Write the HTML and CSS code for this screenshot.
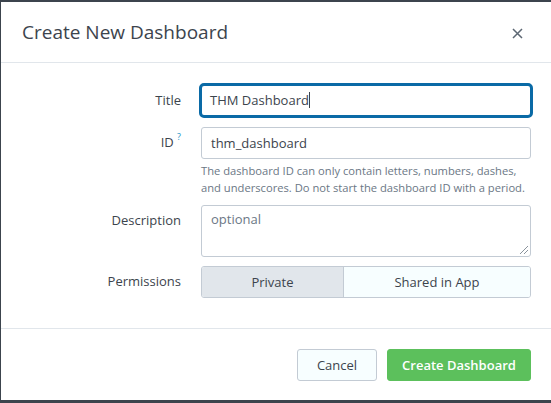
FILE: index.html
```html
<!DOCTYPE html>
<html>
<head>
<meta charset="utf-8">
<link rel="stylesheet" href="styles.css">
</head>
<body>
<div class="modal">
  <div class="header">
    <h1 class="title">Create New Dashboard</h1>
    <svg class="close" width="11" height="11" viewBox="0 0 11 11"><path d="M1 1 L10 10 M10 1 L1 10" stroke="#5c6773" stroke-width="1.5" fill="none"/></svg>
  </div>
  <div class="body">
    <div class="row">
      <label class="label title-label">Title</label>
      <div class="field"><div class="input focused">THM Dashboard<span class="caret"></span></div></div>
    </div>
    <div class="row">
      <label class="label">ID <sup class="help">?</sup></label>
      <div class="field">
        <div class="input">thm_dashboard</div>
        <p class="hint">The dashboard ID can only contain letters, numbers, dashes, and underscores. Do not start the dashboard ID with a period.</p>
      </div>
    </div>
    <div class="row">
      <label class="label">Description</label>
      <div class="field"><div class="textarea"><span class="ph">optional</span><span class="grip"></span></div></div>
    </div>
    <div class="row">
      <label class="label">Permissions</label>
      <div class="field">
        <div class="toggle">
          <span class="opt active">Private</span>
          <span class="opt">Shared in App</span>
        </div>
      </div>
    </div>
  </div>
  <div class="footer">
    <button class="btn cancel">Cancel</button>
    <button class="btn primary">Create Dashboard</button>
  </div>
</div>
</body>
</html>
```
FILE: styles.css
```css
html, body { margin: 0; padding: 0; }
body {
  background: #3c444d;
  width: 551px;
  height: 403px;
  overflow: hidden;
  font-family: "Open Sans", "Liberation Sans", sans-serif;
  color: #3c444d;
}
.modal {
  margin: 2px 0 0 1px;
  width: 550px;
  height: 398px;
  background: #fff;
  display: flex;
  flex-direction: column;
}
.header {
  height: 60px;
  border-bottom: 1px solid #e1e6eb;
  display: flex;
  align-items: center;
  justify-content: space-between;
  padding: 0 28px 0 21px;
}
.title {
  margin: 0;
  font-size: 19px;
  font-weight: 400;
  color: #3c444d;
}
.close {
  margin-top: 3px;
}
.body {
  padding: 20px 20px 0 0;
  height: 245px;
  border-bottom: 1px solid #e1e6eb;
}
.row {
  display: flex;
  margin-bottom: 9px;
}
.label {
  width: 180px;
  text-align: right;
  font-size: 13px;
  color: #3c444d;
  padding-top: 6px;
  box-sizing: border-box;
}
.title-label { padding-top: 8px; }
.help {
  color: #1e93c6;
  font-size: 9px;
  vertical-align: top;
  position: relative;
  top: -3px;
}
.field {
  margin-left: 20px;
  width: 330px;
}
.input {
  height: 32px;
  box-sizing: border-box;
  border: 1px solid #c3cbd4;
  border-radius: 3px;
  font-size: 13px;
  color: #3c444d;
  padding: 6px 9px;
  line-height: 18px;
}
.input.focused {
  border: 3px solid #0a6aa6;
  border-radius: 5px;
  height: 35px;
  margin: 0 0 0 -2px;
  width: 334px;
  padding: 5px 8px;
}
.caret {
  display: inline-block;
  width: 1px;
  height: 16px;
  background: #3c444d;
  vertical-align: -3px;
}
.hint {
  margin: 3px 0 0;
  font-size: 11.2px;
  line-height: 17px;
  color: #6b7785;
}
.textarea {
  position: relative;
  height: 52px;
  box-sizing: border-box;
  border: 1px solid #c3cbd4;
  border-radius: 3px;
  padding: 4px 9px;
  font-size: 13px;
  line-height: 18px;
}
.ph { color: #6b7785; }
.grip {
  position: absolute;
  right: 2px;
  bottom: 2px;
  width: 8px;
  height: 8px;
  background: linear-gradient(135deg, transparent 45%, #8a939c 45%, #8a939c 55%, transparent 55%, transparent 70%, #8a939c 70%, #8a939c 80%, transparent 80%);
}
.toggle {
  display: flex;
  height: 32px;
  box-sizing: border-box;
  border: 1px solid #c3cbd4;
  border-radius: 3px;
  overflow: hidden;
}
.opt {
  display: flex;
  align-items: center;
  justify-content: center;
  font-size: 13px;
  color: #3c444d;
  background: #f7feff;
  flex: 1 1 0;
}
.opt.active {
  background: #e1e6eb;
  flex: 0 0 141px;
  border-right: 1px solid #c3cbd4;
}
.footer {
  display: flex;
  justify-content: flex-end;
  gap: 10px;
  padding: 20px 20px 0 0;
}
.btn {
  height: 32px;
  font-family: inherit;
  font-size: 13px;
  border-radius: 3px;
  padding: 0;
  white-space: nowrap;
}
.cancel {
  background: #f7feff;
  border: 1px solid #c3cbd4;
  color: #3c444d;
  width: 80px;
}
.primary {
  background: #5cc05c;
  border: 1px solid #5cc05c;
  color: #fff;
  font-weight: 600;
  width: 144px;
}
```
